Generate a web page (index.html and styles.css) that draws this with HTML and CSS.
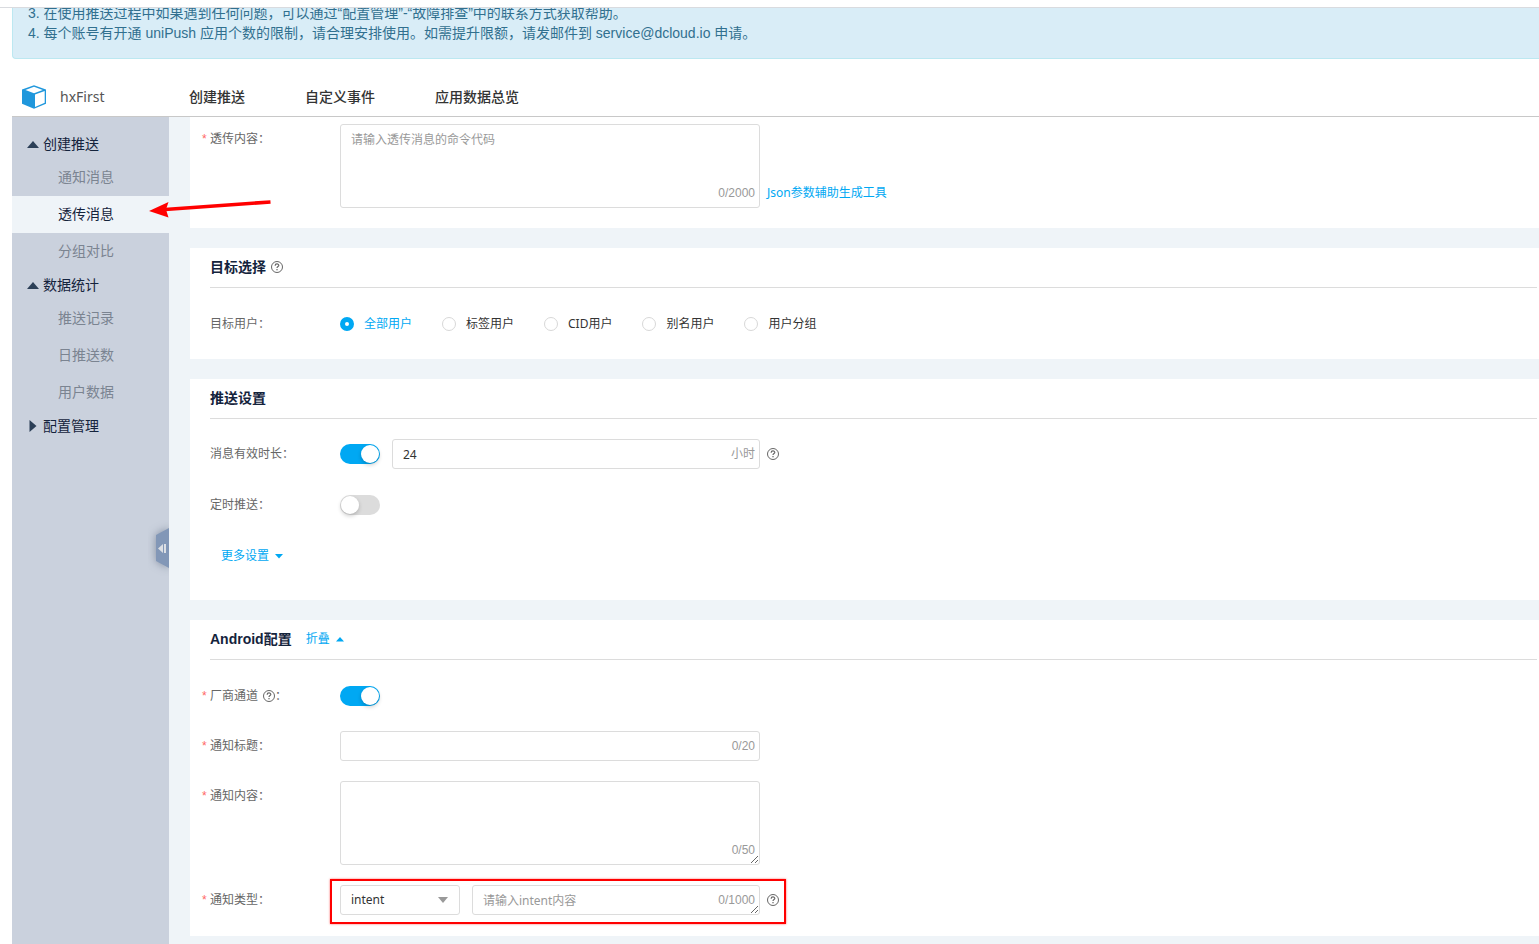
FILE: index.html
```html
<!DOCTYPE html>
<html lang="zh-CN">
<head>
<meta charset="utf-8">
<title>uniPush</title>
<link rel="stylesheet" href="styles.css">
</head>
<body>
<svg class="defs" width="0" height="0" aria-hidden="true">
  <symbol id="help" viewBox="0 0 12 12">
    <circle cx="6" cy="6" r="5.5" fill="none" stroke="currentColor" stroke-width="1"/>
    <path d="M4.2 4.8V4.5a1.8 1.6 0 0 1 3.6 0c0 1-1.8 1.2-1.8 2.5" fill="none" stroke="currentColor" stroke-width="1.2"/>
    <rect x="5.4" y="8" width="1.2" height="1.3" fill="currentColor"/>
  </symbol>
</svg>

<div class="notice-view">
  <ol class="notice" start="3">
    <li>3. 在使用推送过程中如果遇到任何问题，可以通过“配置管理”-“故障排查”中的联系方式获取帮助。</li>
    <li>4. 每个账号有开通 uniPush 应用个数的限制，请合理安排使用。如需提升限额，请发邮件到 service@dcloud.io 申请。</li>
  </ol>
</div>

<header class="header">
  <svg class="logo" viewBox="0 0 26 24" aria-hidden="true">
    <path d="M1 4.4 13 .2 25 4.4V18.8L13 23.8 1 18.8Z" fill="#1f97dc"/>
    <path d="M4.4 4.9 13 1.8 21.8 4.9 13 8.2Z" fill="#fff"/>
    <path d="M14 9.4 23.7 6V17.8L14 21.9Z" fill="#fff"/>
  </svg>
  <span class="app-name">hxFirst</span>
  <nav class="tabs">
    <a href="#">创建推送</a>
    <a href="#">自定义事件</a>
    <a href="#">应用数据总览</a>
  </nav>
</header>

<div class="body">
  <aside class="sidebar">
    <button class="group" type="button"><svg class="tri" viewBox="0 0 12 12"><path d="M0 10 6 3 12 10Z"/></svg>创建推送</button>
    <a class="item" href="#">通知消息</a>
    <a class="item active" href="#">透传消息</a>
    <a class="item" href="#">分组对比</a>
    <button class="group" type="button"><svg class="tri" viewBox="0 0 12 12"><path d="M0 10 6 3 12 10Z"/></svg>数据统计</button>
    <a class="item" href="#">推送记录</a>
    <a class="item" href="#">日推送数</a>
    <a class="item" href="#">用户数据</a>
    <button class="group" type="button"><svg class="tri" viewBox="0 0 12 12"><path d="M2.5 0 9.5 6 2.5 12Z"/></svg>配置管理</button>
    <button class="collapse" type="button" aria-label="收起">
      <svg viewBox="0 0 13 40"><path d="M13 0V40L0 33V7Z" fill="#8297b7"/><path d="M2 20.5 7 16V25Z M8 16H10V25H8Z" fill="#dcdfe4"/></svg>
    </button>
    <svg class="arrow" viewBox="0 0 124 20" aria-hidden="true"><path d="M16 11.5 121.5 4" fill="none" stroke="#f00" stroke-width="3.6"/><path d="M0 13 19.5 4 17 11.5 19.5 19.5Z" fill="#f00"/></svg>
  </aside>

  <main class="main">
    <section class="card card-first">
      <div class="row">
        <label class="label required" for="payload">透传内容：</label>
        <div class="box"><textarea id="payload" class="control tall fixed" placeholder="请输入透传消息的命令代码"></textarea><span class="counter">0/2000</span></div>
        <a class="link bottom" href="#">Json参数辅助生成工具</a>
      </div>
    </section>

    <section class="card">
      <h2 class="title">目标选择<svg class="help"><use href="#help"/></svg></h2>
      <div class="rows rows-target">
        <div class="row">
          <span class="label" id="target">目标用户：</span>
          <div class="radios" role="radiogroup" aria-labelledby="target">
            <label class="radio"><input type="radio" name="target" checked><span>全部用户</span></label>
            <label class="radio"><input type="radio" name="target"><span>标签用户</span></label>
            <label class="radio"><input type="radio" name="target"><span>CID用户</span></label>
            <label class="radio"><input type="radio" name="target"><span>别名用户</span></label>
            <label class="radio"><input type="radio" name="target"><span>用户分组</span></label>
          </div>
        </div>
      </div>
    </section>

    <section class="card">
      <h2 class="title">推送设置</h2>
      <div class="rows rows-push">
        <div class="row">
          <label class="label" for="ttl-on">消息有效时长：</label>
          <div class="combo">
            <input id="ttl-on" class="switch" type="checkbox" checked>
            <div class="box grow"><input class="control" type="text" value="24" aria-label="时长"><span class="counter">小时</span></div>
          </div>
          <svg class="help"><use href="#help"/></svg>
        </div>
        <div class="row">
          <label class="label" for="timed">定时推送：</label>
          <input id="timed" class="switch" type="checkbox">
        </div>
        <button class="link more" type="button">更多设置<svg class="caret" viewBox="0 0 8 5"><path d="M0 0H8L4 4.5Z"/></svg></button>
      </div>
    </section>

    <section class="card">
      <h2 class="title">Android配置<button class="link fold" type="button">折叠<svg class="caret" viewBox="0 0 8 5"><path d="M0 4.5H8L4 0Z"/></svg></button></h2>
      <div class="rows">
        <div class="row">
          <label class="label required" for="vendor">厂商通道<svg class="help"><use href="#help"/></svg>：</label>
          <input id="vendor" class="switch" type="checkbox" checked>
        </div>
        <div class="row">
          <label class="label required" for="ntitle">通知标题：</label>
          <div class="box"><input id="ntitle" class="control" type="text"><span class="counter">0/20</span></div>
        </div>
        <div class="row">
          <label class="label required" for="ncontent">通知内容：</label>
          <div class="box"><textarea id="ncontent" class="control tall"></textarea><span class="counter">0/50</span></div>
        </div>
        <div class="row">
          <label class="label required" for="ntype">通知类型：</label>
          <div class="marked">
            <div class="combo">
              <div class="select"><select id="ntype" class="control"><option>intent</option></select><svg viewBox="0 0 10 6"><path d="M0 0H10L5 6Z" fill="#999"/></svg></div>
              <div class="box grow"><textarea class="control" placeholder="请输入intent内容" aria-label="intent"></textarea><span class="counter">0/1000</span></div>
            </div>
            <svg class="help"><use href="#help"/></svg>
          </div>
        </div>
      </div>
    </section>
  </main>
</div>
</body>
</html>
```
FILE: styles.css
```css
* { box-sizing: border-box; }

body {
  margin: 0;
  min-height: 100vh;
  display: flex;
  flex-direction: column;
  padding-top: 7px;
  background: #fff;
  color: #333;
  font: 12px/20px "Noto Sans", "Noto Sans CJK SC", sans-serif;
  overflow-x: hidden;
}

button, input, select, textarea { font: inherit; color: inherit; margin: 0; }
button { border: 0; padding: 0; background: none; cursor: pointer; }
a { color: inherit; text-decoration: none; }
.defs { position: absolute; }

.notice-view {
  height: 52px;
  display: flex;
  align-items: flex-end;
  padding-left: 12px;
  border-top: 1px solid #d9dbdf;
  overflow: hidden;
}
.notice {
  flex: 1;
  margin: 0;
  padding: 15px;
  list-style: none;
  background: #d9edf7;
  border: 1px solid #bce8f1;
  border-right: 0;
  border-radius: 4px 0 0 4px;
  color: #31708f;
  font: 14px/20px "Liberation Sans", "Noto Sans CJK SC", sans-serif;
}

.header {
  display: flex;
  align-items: center;
  height: 58px;
  margin-left: 12px;
  padding: 18px 0 0 9px;
  border-bottom: 1px solid #c8c8c8;
  font-size: 14px;
}
.logo { width: 26px; height: 24px; }
.app-name { width: 142px; padding-left: 13px; color: #555; }
.tabs { display: flex; gap: 60px; font-weight: 500; }

.body { flex: 1; display: flex; padding-left: 12px; }

.sidebar {
  position: relative;
  width: 157px;
  flex: none;
  padding-top: 12px;
  background: #cad1dd;
  font-size: 14px;
}
.group {
  display: flex;
  align-items: center;
  gap: 4px;
  width: 100%;
  height: 30px;
  padding-left: 15px;
  color: #14233c;
}
.tri { width: 12px; height: 12px; fill: #2b3f57; }
.item { display: block; padding: 0 0 2px 46px; line-height: 35px; color: #7b8491; }
.item.active { background: #eff4f8; color: #14233c; }
.collapse {
  position: absolute;
  right: 0;
  top: 411px;
  width: 13px;
  height: 40px;
  filter: drop-shadow(0 0 4px rgba(60, 75, 100, .5));
  clip-path: inset(-8px 0 -8px -8px);
}
.collapse svg { display: block; width: 13px; height: 40px; }
.arrow { position: absolute; left: 137px; top: 81px; width: 124px; height: 20px; z-index: 1; }

.main {
  flex: 1;
  min-width: 0;
  display: flex;
  flex-direction: column;
  gap: 20px;
  padding: 0 0 8px 21px;
  background: #eff4f8;
}
.card { padding: 0 2px 0 20px; background: #fff; }
.card-first { padding-top: 7px; padding-bottom: 20px; }
.title {
  display: flex;
  align-items: center;
  height: 40px;
  margin: 0;
  padding-bottom: 2px;
  border-bottom: 1px solid #dcdcdc;
  color: #14233c;
  font: bold 14px/20px "Liberation Sans", "Noto Sans CJK SC", sans-serif;
}
.help { flex: none; width: 12px; height: 12px; color: #666; }
.title .help { margin-left: 5px; }

.rows { display: flex; flex-direction: column; gap: 20px; padding: 21px 0; }
.rows-target { padding-bottom: 20px; }
.rows-push { gap: 21px; padding: 20px 0 29px; }
.row { display: flex; min-height: 30px; }
.label {
  display: flex;
  align-items: center;
  flex: none;
  width: 130px;
  height: 30px;
  color: #666;
}
.label .help { margin-left: 5px; }
.required::before {
  content: "*";
  width: 8px;
  margin-left: -8px;
  color: #f66;
  font-family: "Liberation Sans", sans-serif;
}

.box { position: relative; width: 420px; }
.box.grow { width: auto; flex: 1; }
.control {
  display: block;
  width: 100%;
  height: 30px;
  padding: 4px 10px;
  border: 1px solid #dcdcdc;
  border-radius: 3px;
  background: #fff;
  outline: 0;
}
.control::placeholder { color: #999; }
textarea.control { padding-top: 5px; overflow: hidden; }
.control.tall { height: 84px; }
.fixed { resize: none; }
.counter {
  position: absolute;
  right: 5px;
  bottom: 0;
  color: #999;
  font: 12px/30px "Liberation Sans", "Noto Sans CJK SC", sans-serif;
  pointer-events: none;
}
.row > .help { margin: 9px 0 0 7px; }
.combo { display: flex; align-items: center; gap: 12px; width: 420px; }

.link { color: #00a8f3; font: 12px/30px "Noto Sans", "Noto Sans CJK SC", sans-serif; }
.bottom { align-self: flex-end; margin-left: 7px; }
.more { align-self: flex-start; margin-left: 11px; }
.fold { margin-left: 14px; }
.caret { width: 8px; height: 5px; margin-left: 6px; vertical-align: 1px; fill: currentColor; }

.radios { display: flex; align-items: center; gap: 30px; color: #333; }
.radio { display: flex; align-items: center; gap: 10px; }
.radio input {
  appearance: none;
  width: 14px;
  height: 14px;
  border: 1px solid #d8d8d8;
  border-radius: 50%;
  background: #fff;
}
.radio input:checked { border: 5px solid #00a8f3; }
.radio input:checked + span { color: #00a8f3; }

.switch {
  appearance: none;
  flex: none;
  align-self: center;
  width: 40px;
  height: 20px;
  padding: 1px;
  border-radius: 10px;
  background: #dcdcdc;
}
.switch::before {
  content: "";
  display: block;
  width: 18px;
  height: 18px;
  border-radius: 50%;
  background: #fff;
  box-shadow: 0 2px 4px rgba(0, 0, 0, .2);
}
.switch:checked { background: #00a8f3; }
.switch:checked::before { margin-left: auto; }

.marked { position: relative; display: flex; align-items: center; gap: 7px; }
.marked::after {
  content: "";
  position: absolute;
  inset: -6px -7px -9px -10px;
  border: 2px solid #f00;
  box-shadow: 0 0 2px rgba(255, 0, 0, .6);
  pointer-events: none;
}
.select { position: relative; width: 120px; }
.select select { appearance: none; }
.select svg { position: absolute; right: 12px; top: 12px; width: 10px; height: 6px; pointer-events: none; }
```
